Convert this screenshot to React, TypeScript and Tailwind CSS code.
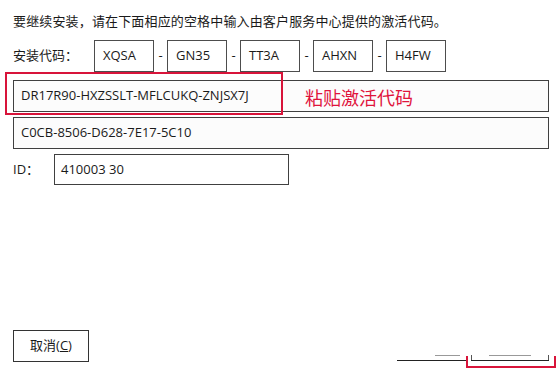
const font = { fontFamily: '"Open Sans", "Noto Sans CJK SC", sans-serif' };

const codes = ["XQSA", "GN35", "TT3A", "AHXN", "H4FW"];

export default function App() {
    return (
        <div
            className="relative w-[560px] h-[373px] overflow-hidden bg-white text-[13px] text-[#1a1a1a]"
            style={font}
        >
            <div className="flex flex-col pl-[13px] pr-[11px]">
                <p className="pt-[12px] h-[40px] leading-[19px] tracking-[0.15px]">
                    要继续安装，请在下面相应的空格中输入由客户服务中心提供的激活代码。
                </p>

                <div className="flex items-center h-[32px]">
                    <span className="w-[81px]">安装代码：</span>
                    {codes.map((code, i) => (
                        <div key={code} className="flex items-center">
                            {i > 0 && <span className="w-[13px] text-center">-</span>}
                            <div className="w-[60px] h-[32px] border border-[#4d4d4d] flex items-center pl-[8px]">
                                {code}
                            </div>
                        </div>
                    ))}
                </div>

                <div className="mt-[8px] h-[32px] border border-[#404040] bg-[#fcfcfc] flex items-center pl-[7px]">
                    DR17R90-HXZSSLT-MFLCUKQ-ZNJSX7J
                </div>
                <div className="mt-[5px] h-[32px] border border-[#404040] bg-[#fcfcfc] flex items-center pl-[7px]">
                    C0CB-8506-D628-7E17-5C10
                </div>

                <div className="mt-[5px] flex items-center h-[31px]">
                    <span className="w-[41px]">ID：</span>
                    <div className="w-[235px] h-[31px] border border-[#404040] flex items-center pl-[6px]">
                        410003 30
                    </div>
                </div>

                <div className="mt-[145px]">
                    <button className="w-[76px] h-[32px] border border-[#333] bg-white flex items-center justify-center">
                        取消(<span className="underline">C</span>)
                    </button>
                </div>
            </div>

            {/* annotation */}
            <div className="absolute left-[5px] top-[72px] w-[278px] h-[43px] border-2 border-[#d8143a]" />
            <span className="absolute left-[305px] top-[85px] text-[18px] leading-[26px] text-[#e0143c]">
                粘贴激活代码
            </span>

            {/* cropped buttons at the bottom right */}
            <div className="absolute left-[397px] top-[360px] w-[69px] h-px bg-[#222]" />
            <div className="absolute left-[471px] top-[360px] w-[78px] h-px bg-[#222]" />
            <div className="absolute left-[435px] top-[355px] w-[25px] h-px bg-[#999]" />
            <div className="absolute left-[489px] top-[355px] w-[42px] h-px bg-[#999]" />
            <div className="absolute left-[471px] top-[355px] w-px h-[5px] bg-[#555]" />
            <div className="absolute left-[548px] top-[355px] w-px h-[5px] bg-[#555]" />
            <div className="absolute left-[466px] top-[356px] w-[90px] h-[12px] border-2 border-t-0 border-[#d8143a]" />
        </div>
    );
}
